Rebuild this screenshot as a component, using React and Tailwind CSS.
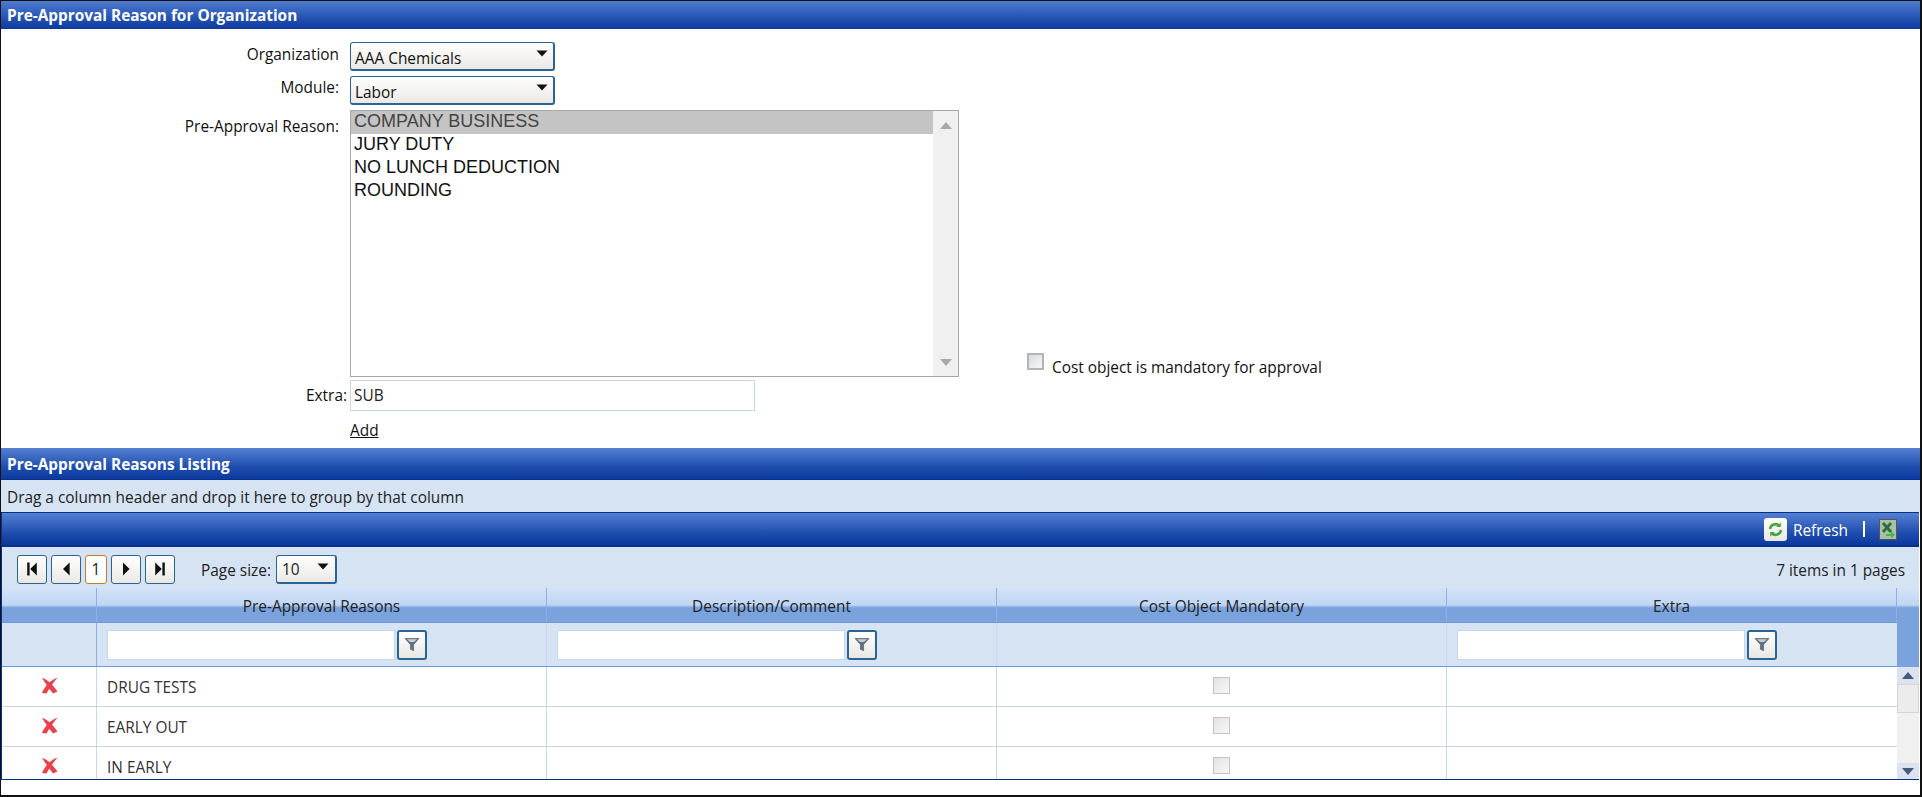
const SectionHeader = ({ title }) => (
  <div className="h-[32px] flex items-center pl-[6px] pt-[2px] bg-[linear-gradient(#5580d2,#204fb0_60%,#0a389d)] border-b border-[#06308f] text-white font-bold">
    {title}
  </div>
)

const Caret = () => (
  <svg width="12" height="7" viewBox="0 0 12 7"><path d="M0.5 0.5h11L6 6.5z" fill="#111" /></svg>
)

const Dropdown = ({ value, className }) => (
  <div className={`flex items-center justify-between h-[29px] pl-[4px] pr-[5px] rounded-[3px] border border-[#2a6496] border-r-2 border-b-2 bg-[linear-gradient(#ffffff,#ebe9e5)] text-[#111] ${className}`}>
    <span className="pt-[5px]">{value}</span>
    <span className="pb-[6px] flex"><Caret /></span>
  </div>
)

const ScrollArrow = ({ down, color = "#a9a9a9" }) => (
  <svg width="12" height="7" viewBox="0 0 12 7">
    <path d={down ? "M0 0h12L6 7z" : "M6 0l6 7H0z"} fill={color} />
  </svg>
)

const Funnel = () => (
  <svg width="16" height="15" viewBox="0 0 16 15">
    <path d="M1 1.500h14L9.600 7.500v6.200l-3.200-1.400V7.500z" fill="#5f7182" stroke="#4d5862" strokeWidth="0.6" />
    <path d="M3 2.200h10L10 5H6z" fill="#c7d0d8" />
  </svg>
)

const FilterButton = () => (
  <div className="w-[30px] h-[30px] flex items-center justify-center rounded-[3px] border-2 border-[#2a6496] bg-[linear-gradient(#ffffff,#e9e7e2)]">
    <Funnel />
  </div>
)

const PagerButton = ({ d }) => (
  <div className="w-[30px] h-[29px] flex items-center justify-center rounded-[3px] border border-[#2a6496] bg-[linear-gradient(#ffffff,#ebe9e5)]">
    <svg width="12" height="14" viewBox="0 0 10 11"><path d={d} fill="#111" /></svg>
  </div>
)

const FilterCell = () => (
  <div className="flex items-center gap-[2px] pl-[10px]">
    <div className="w-[288px] h-[30px] bg-white border border-[#c5d8f0]" />
    <FilterButton />
  </div>
)

const RedX = () => (
  <svg width="17" height="17" viewBox="0 0 17 17">
    <path d="M1 1C6 2 11 7 16.500 14.500L12 16.500C8 11.500 4.500 6.500 1 1z" fill="#e8424c" />
    <path d="M16.500 0.500C10.500 2.500 4.500 8 1 16L5.500 16.500C8.500 10.500 12.500 5.500 16.500 0.500z" fill="#ee3f49" />
  </svg>
)

const GridCheckbox = () => (
  <div className="w-[17px] h-[17px] border border-[#c4c4c4] bg-[linear-gradient(135deg,#e2e2e2,#f8f8f8)]" />
)

const rows = [
  { name: "DRUG TESTS", h: "h-[40px]" },
  { name: "EARLY OUT", h: "h-[40px]" },
  { name: "IN EARLY", h: "h-[32px]", clip: true },
]

const reasons = ["COMPANY BUSINESS", "JURY DUTY", "NO LUNCH DEDUCTION", "ROUNDING"]

const App = () => {
  return (
    <div className="w-[1922px] h-[797px] overflow-hidden bg-white border-l border-r-2 border-b-2 border-t border-[#111] font-['Open_Sans','Noto_Sans',sans-serif] text-[15.4px] text-[#222]">
      <div className="h-[28px] flex items-center pl-[6px] pt-[2px] bg-[linear-gradient(#4f7bcd,#2453b3_60%,#0c3a9e)] text-white font-bold">
        Pre-Approval Reason for Organization
      </div>

      <div className="h-[419px] flex">
        <div className="w-[338px] flex flex-col items-end text-[#111]">
          <div className="h-[33px] mt-[14px]">Organization</div>
          <div className="h-[39px]">Module:</div>
          <div className="h-[265px]">Pre-Approval Reason:</div>
          <div className="pt-[4px] -mr-[8px]">Extra:</div>
        </div>
        <div className="w-[11px]" />
        <div className="w-[610px] flex flex-col items-start pt-[13px]">
          <Dropdown value="AAA Chemicals" className="w-[205px]" />
          <Dropdown value="Labor" className="w-[205px] mt-[5px]" />
          <div className="w-[609px] h-[267px] mt-[5px] flex border border-[#a8a8a8] bg-white font-['Liberation_Sans',sans-serif] text-[18px] leading-[21px] text-[#111]">
            <div className="flex-1">
              {reasons.map((r, i) => (
                <div key={r} className={`h-[23px] pl-[3px] ${i === 0 ? "bg-[#c4c4c4] text-[#444]" : ""}`}>{r}</div>
              ))}
            </div>
            <div className="w-[25px] bg-[#f0f0f0] flex flex-col items-center justify-between pt-[11px] pb-[10px]">
              <ScrollArrow />
              <ScrollArrow down />
            </div>
          </div>
          <div className="w-[405px] h-[31px] mt-[3px] pl-[3px] flex items-center border border-[#c5d8f0] text-[#222]">SUB</div>
          <span className="mt-[8px] underline text-[#111]">Add</span>
        </div>
        <div className="flex items-start pt-[324px] pl-[67px]">
          <div className="w-[17px] h-[17px] border-2 border-[#b4b4b4] bg-[linear-gradient(135deg,#d8dadf,#f8f8f8)]" />
          <span className="ml-[8px] mt-[3px] text-[#111]">Cost object is mandatory for approval</span>
        </div>
      </div>

      <SectionHeader title="Pre-Approval Reasons Listing" />

      <div className="h-[32px] flex items-center pl-[6px] pt-[3px] bg-[#d5e3f2] text-[#222]">
        Drag a column header and drop it here to group by that column
      </div>

      <div className="mr-[1px] border border-r-0 border-t-0 border-[#06308f]">
        <div className="h-[35px] flex items-center justify-end pr-[22px] border-t border-b-2 border-[#06308f] bg-[linear-gradient(#5580d2,#204fb0_60%,#0a389d)] text-white">
          <div className="w-[23px] h-[23px] flex items-center justify-center rounded-[3px] bg-[linear-gradient(#ffffff,#e6e6e2)]">
            <svg width="17" height="17" viewBox="0 0 17 17" fill="none" stroke="#4aa63c" strokeWidth="2.600">
              <path d="M3 8a5.500 5.500 0 0 1 9.500-3" />
              <path d="M14 9a5.500 5.500 0 0 1-9.500 3" />
              <path d="M13.800 1.500v4.600H9.200z" fill="#4aa63c" stroke="none" />
              <path d="M3.200 15.500v-4.600h4.600z" fill="#4aa63c" stroke="none" />
            </svg>
          </div>
          <span className="ml-[6px] pt-[3px]">Refresh</span>
          <span className="ml-[15px] w-[2px] h-[16px] bg-white" />
          <div className="ml-[14px] w-[18px] h-[21px] flex items-center justify-center bg-[#a9bfa9] border border-[#555]">
            <svg width="16" height="19" viewBox="0 0 16 19" fill="none">
              <path d="M3 3l8 9M11 3L3 12" stroke="#2f6f3a" strokeWidth="3" />
              <path d="M6 14h5v-2.500l4 3.500-4 3v-2H6z" fill="#3dbb4a" />
            </svg>
          </div>
        </div>

        <div className="h-[41px] flex items-center pt-[3px] pl-[15px] pr-[14px] bg-[#d5e3f2]">
          <div className="flex items-center gap-[4px]">
            <PagerButton d="M1 0h2v11H1zM9 0v11L3.500 5.500z" />
            <PagerButton d="M8 0v11L2.500 5.500z" />
            <div className="w-[22px] h-[29px] flex items-center justify-center rounded-[3px] border border-[#c77a30] bg-white text-[#222] pt-[2px]">1</div>
            <PagerButton d="M2.500 0v11L8 5.500z" />
            <PagerButton d="M1 0v11l5.500-5.500zM7 0h2v11H7z" />
          </div>
          <span className="ml-[26px] pt-[3px]">Page size:</span>
          <div className="ml-[5px] w-[61px] h-[29px] flex items-center justify-between pl-[5px] pr-[6px] rounded-[3px] border border-[#2a6496] border-r-2 border-b-2 bg-[linear-gradient(#ffffff,#ebe9e5)]">
            <span className="pt-[3px]">10</span>
            <span className="pb-[4px] flex"><Caret /></span>
          </div>
          <span className="ml-auto pt-[3px]">7 items in 1 pages</span>
        </div>

        <div className="flex">
          <div className="w-[1895px]">
            <div className="grid grid-cols-[95px_450px_450px_450px_450px] h-[34px] bg-[linear-gradient(#d4e3f8,#c0d6f4_50%,#7aa2dc_58%,#7aa2dc)] text-center text-[#222]">
              <div className="border-r border-[#8fb0e0]" />
              <div className="border-r border-[#8fb0e0] pt-[7px]">Pre-Approval Reasons</div>
              <div className="border-r border-[#8fb0e0] pt-[7px]">Description/Comment</div>
              <div className="border-r border-[#8fb0e0] pt-[7px]">Cost Object Mandatory</div>
              <div className="border-r border-[#8fb0e0] pt-[7px]">Extra</div>
            </div>
            <div className="grid grid-cols-[95px_450px_450px_450px_450px] h-[45px] items-stretch bg-[#d5e3f2] border-t border-b border-[#6f9ad8]">
              <div className="border-r border-[#8fb0e0]" />
              <div className="border-r border-[#c5d8f0] flex items-center"><FilterCell /></div>
              <div className="border-r border-[#c5d8f0] flex items-center"><FilterCell /></div>
              <div className="border-r border-[#c5d8f0]" />
              <div className="flex items-center"><FilterCell /></div>
            </div>
            {rows.map((row) => (
              <div key={row.name} className={`grid grid-cols-[95px_450px_450px_450px_450px] ${row.h} overflow-hidden ${row.clip ? "" : "border-b border-[#c9d6ee]"}`}>
                <div className="border-r border-[#c9d6ee] flex justify-center pt-[10px]"><RedX /></div>
                <div className="border-r border-[#c9d6ee] pl-[10px] pt-[9px] text-[#333]">{row.name}</div>
                <div className="border-r border-[#c9d6ee]" />
                <div className="border-r border-[#c9d6ee] flex justify-center pt-[10px]"><GridCheckbox /></div>
                <div />
              </div>
            ))}
          </div>
          <div className="flex-1 flex flex-col">
            <div className="h-[34px] bg-[linear-gradient(#d4e3f8,#c0d6f4_50%,#7aa2dc_58%,#7aa2dc)]" />
            <div className="h-[45px] bg-[#7aa2dc]" />
            <div className="flex-1 flex flex-col bg-[#f0f0f0]">
              <div className="h-[17px] flex items-center justify-center bg-[#dbe3ee]"><ScrollArrow color="#47597f" /></div>
              <div className="h-[29px] border border-[#d4d4d4] bg-[#ececec]" />
              <div className="flex-1" />
              <div className="h-[16px] flex items-center justify-center bg-[#dbe3ee]"><ScrollArrow down color="#47597f" /></div>
            </div>
          </div>
        </div>
      </div>
    </div>
  )
}

export default App
